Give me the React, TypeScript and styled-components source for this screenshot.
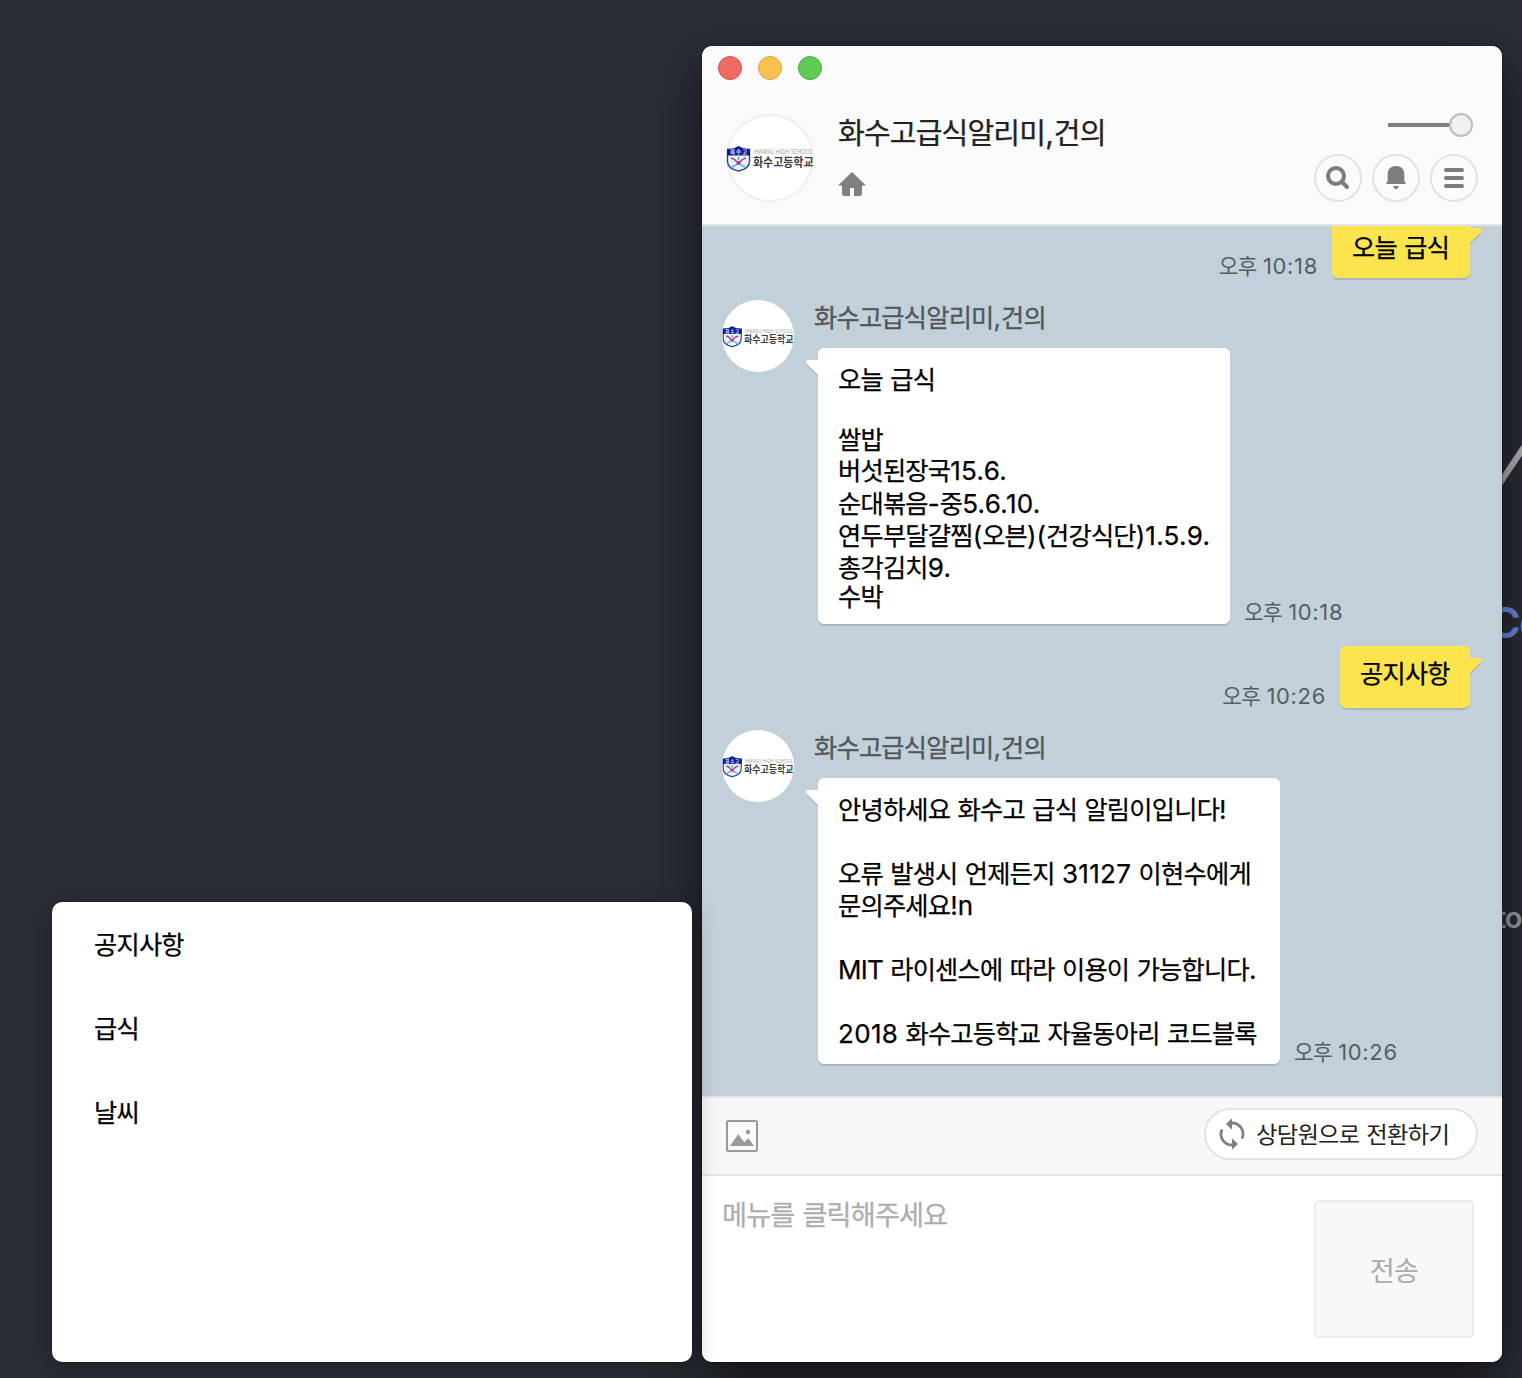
import React from "react";
import styled, { createGlobalStyle, css } from "styled-components";

const Global = createGlobalStyle`
  * { box-sizing: border-box; }
  html, body { margin: 0; padding: 0; }
  body { background: #2a2d36; }
`;

const Desktop = styled.div`
  position: relative;
  width: 1522px;
  height: 1378px;
  overflow: hidden;
  background: #2a2d36;
  font-family: Inter, "Noto Sans CJK KR", sans-serif;
`;

const BackdropText = styled.span<{ $top: number; $left: number; $size: number; $color: string }>`
  position: absolute;
  top: ${(p) => p.$top}px;
  left: ${(p) => p.$left}px;
  font-size: ${(p) => p.$size}px;
  line-height: 1;
  font-weight: 600;
  letter-spacing: -0.04em;
  color: ${(p) => p.$color};
  white-space: nowrap;
`;

const BackdropStroke = styled.svg`
  position: absolute;
  left: 1490px;
  top: 430px;
`;

const MenuWindow = styled.nav`
  position: absolute;
  left: 52px;
  top: 902px;
  width: 640px;
  height: 460px;
  border-radius: 10px;
  background: #fff;
  box-shadow: 0 0 2px rgba(0, 0, 0, 0.5), 0 6px 26px rgba(0, 0, 0, 0.3);
  display: flex;
  flex-direction: column;
  padding: 0 42px;
`;

const MenuItem = styled.div`
  height: 84px;
  display: flex;
  align-items: center;
  font-size: 26px;
  color: #000;
  -webkit-text-stroke: 0.25px;
`;

const ChatWindow = styled.main`
  position: absolute;
  left: 702px;
  top: 46px;
  width: 800px;
  height: 1316px;
  border-radius: 10px;
  background: #fff;
  box-shadow: 0 0 2px rgba(0, 0, 0, 0.7), 0 20px 50px rgba(0, 0, 0, 0.6);
`;

const ChatFrame = styled.div`
  height: 100%;
  border-radius: 10px;
  overflow: hidden;
  display: flex;
  flex-direction: column;
`;

const Header = styled.header`
  flex: 0 0 180px;
  background: #fafafa;
  border-bottom: 2px solid #e4e5e6;
  display: flex;
  flex-direction: column;
`;

const TrafficLights = styled.div`
  display: flex;
  gap: 16px;
  padding: 10px 16px 0;
`;

const Light = styled.i<{ $fill: string; $edge: string }>`
  width: 24px;
  height: 24px;
  border-radius: 50%;
  background: ${(p) => p.$fill};
  border: 1px solid ${(p) => p.$edge};
`;

const Profile = styled.div`
  display: flex;
  padding: 34px 24px 0;
`;

const ProfileInfo = styled.div`
  flex: 1;
  padding-left: 24px;
  display: flex;
  flex-direction: column;
  align-items: flex-start;
`;

const Title = styled.h1`
  margin: 0;
  font-size: 30px;
  font-weight: 400;
  line-height: 38px;
  color: #222;
  -webkit-text-stroke: 0.25px;
`;

const HomeIcon = styled.svg`
  margin-top: 20px;
`;

const Controls = styled.div`
  display: flex;
  flex-direction: column;
  align-items: flex-end;
  margin-top: -1px;
`;

const Slider = styled.div`
  display: flex;
  align-items: center;
  margin-right: 5px;
`;

const Track = styled.div`
  width: 61px;
  height: 4px;
  background: #808080;
`;

const Knob = styled.div`
  width: 24px;
  height: 24px;
  border-radius: 50%;
  background: #f0f0f0;
  border: 2px solid #bcbcbc;
`;

const ButtonRow = styled.div`
  display: flex;
  gap: 10px;
  margin-top: 17px;
`;

const RoundButton = styled.button`
  width: 48px;
  height: 48px;
  padding: 0;
  border-radius: 50%;
  border: 2px solid #e2e2e2;
  background: #fbfbfb;
  display: flex;
  align-items: center;
  justify-content: center;
`;

const AvatarCircle = styled.div<{ $size: number; $ring?: boolean }>`
  flex: none;
  width: ${(p) => p.$size}px;
  height: ${(p) => p.$size}px;
  border-radius: 50%;
  overflow: hidden;
  background: #fff;
  box-shadow: ${(p) => (p.$ring ? "inset 0 0 0 2px #efefef" : "none")};
  svg { display: block; }
`;

const Conversation = styled.section`
  flex: 1;
  min-height: 0;
  overflow: hidden;
  background: #c2d0da;
  display: flex;
  flex-direction: column;
  justify-content: flex-end;
  gap: 22px;
  padding: 0 32px 32px 20px;
`;

const MineRow = styled.div`
  flex: none;
  display: flex;
  justify-content: flex-end;
  align-items: flex-end;
  gap: 14px;
`;

const BotRow = styled.div`
  flex: none;
  display: flex;
  align-items: flex-start;
`;

const BotBody = styled.div`
  padding-left: 20px;
`;

const Sender = styled.div`
  height: 48px;
  padding-top: 2px;
  font-size: 26px;
  line-height: 32px;
  color: #50565b;
  -webkit-text-stroke: 0.3px;
`;

const BubbleRow = styled.div`
  display: flex;
  align-items: flex-end;
  gap: 14px;
  padding-left: 4px;
`;

const bubble = css`
  position: relative;
  border-radius: 6px;
  font-size: 26px;
  color: #000;
  box-shadow: 0 2px 0 #a9b7c3;
  -webkit-text-stroke: 0.25px;
`;

const MyBubble = styled.div<{ $width: number; $top: number }>`
  ${bubble}
  width: ${(p) => p.$width}px;
  height: 62px;
  padding: ${(p) => p.$top}px 20px 0;
  background: #fbe44d;
`;

const BotBubble = styled.div<{ $width: number; $top: number; $bottom: number }>`
  ${bubble}
  width: ${(p) => p.$width}px;
  padding: ${(p) => p.$top}px 20px ${(p) => p.$bottom}px;
  background: #fff;
`;

const Line = styled.div<{ $h: number }>`
  height: ${(p) => p.$h}px;
  line-height: ${(p) => p.$h}px;
  white-space: nowrap;
`;

const Tail = styled.svg<{ $mine?: boolean }>`
  position: absolute;
  top: 12px;
  ${(p) => (p.$mine ? "right: -12px; transform: scaleX(-1);" : "left: -12px;")}
`;

const Hangul = styled.span`
  font-family: "Noto Sans CJK KR", sans-serif;
  font-size: 0.97em;
  letter-spacing: -0.03em;
  line-height: 1;
`;

const Digits = styled.span`
  letter-spacing: 0.012em;
`;

const Latin = styled.span`
  letter-spacing: -0.03em;
`;

const Time = styled.time`
  font-size: 22px;
  line-height: 24px;
  color: #555d64;
  white-space: nowrap;
  ${Digits} { letter-spacing: 0.03em; }
`;

const Toolbar = styled.div`
  flex: 0 0 80px;
  border-top: 2px solid #e2e4e6;
  border-bottom: 2px solid #e4e4e4;
  background: #f7f7f7;
  display: flex;
  align-items: center;
  justify-content: space-between;
  padding: 0 24px;
`;

const TransferButton = styled.button`
  width: 274px;
  height: 52px;
  margin-bottom: 4px;
  padding: 0 0 0 8px;
  border: 2px solid #e3e3e3;
  border-radius: 26px;
  background: #fff;
  display: flex;
  align-items: center;
  gap: 6px;
  font-family: inherit;
  font-size: 24px;
  color: #222;
  white-space: nowrap;
`;

const Composer = styled.footer`
  flex: 0 0 186px;
  background: #fff;
  display: flex;
  justify-content: space-between;
  padding: 24px 28px 24px 20px;
`;

const Placeholder = styled.div`
  margin-top: -1px;
  font-size: 28px;
  line-height: 32px;
  color: #adadad;
  -webkit-text-stroke: 0.3px;
`;

const SendButton = styled.button`
  width: 160px;
  height: 138px;
  padding: 3px 0 0;
  border: 2px solid #ebebeb;
  border-radius: 5px;
  background: #f8f8f8;
  font-family: inherit;
  font-size: 28px;
  color: #aaa;
`;

const Text = ({ children }: { children: string }) => (
  <span>
    {children.split(/([\u3131-\uD79D]+|[0-9][0-9.:]*|[A-Z]+)/).map((part, i) => {
      if (i % 2 === 0) return part;
      if (/^[0-9]/.test(part)) return <Digits key={i}>{part}</Digits>;
      if (/^[A-Z]/.test(part)) return <Latin key={i}>{part}</Latin>;
      return <Hangul key={i}>{part}</Hangul>;
    })}
  </span>
);

const Avatar = ({ size, ring }: { size: number; ring?: boolean }) => (
  <AvatarCircle $size={size} $ring={ring}>
    <svg width={size} height={size} viewBox="0 0 88 88">
      <path d="M1.500 35.500 Q8 36 12.500 33 Q17 36 23.500 35.500 V47 Q23.500 55 12.500 57 Q1.500 55 1.500 47Z" fill="#e9f5fc" stroke="#2b3f9b" strokeWidth="1.400" />
      <path d="M1 35 Q8 35.500 12.500 32 Q17 35.500 24 35 V41.500 H1Z" fill="#0b1a9a" />
      <text x="4" y="40.200" fontSize="5.500" fontWeight="700" fill="#dfe6ff" textLength="17" fontFamily="Noto Sans CJK KR">화수고</text>
      <path d="M5 44 Q9 45 11 48 M20 44 Q16 45 14 48" stroke="#b23a8c" strokeWidth="1.700" fill="none" />
      <path d="M6 53 Q9 52 11 50 M19 53 Q16 52 14 50 M12.500 43V46" stroke="#4aa7dc" strokeWidth="1.600" fill="none" />
      <circle cx="12.500" cy="49" r="2" fill="#c22f70" />
      <text x="28" y="40" fontSize="7.200" fill="#9c9c9c" textLength="59" lengthAdjust="spacingAndGlyphs" fontFamily="Open Sans">HWASU HIGH SCHOOL</text>
      <text x="27" y="53" fontSize="12.500" fontWeight="700" fill="#3c3c3c" textLength="60.500" lengthAdjust="spacingAndGlyphs" fontFamily="Noto Sans CJK KR">화수고등학교</text>
    </svg>
  </AvatarCircle>
);

const BubbleTail = ({ mine }: { mine?: boolean }) => (
  <Tail $mine={mine} width="12" height="18" viewBox="0 0 12 18">
    <path d="M2 2 H12 V17 L1 6Z" fill="#a9b7c3" />
    <path d="M2 0 H12 V15 L1 4 Q-1 1 2 0Z" fill={mine ? "#fbe44d" : "#fff"} />
  </Tail>
);

type BotMessage = { width: number; top: number; bottom: number; time: string; lines: [string, number][] };

const meal: BotMessage = {
  width: 412,
  top: 18,
  bottom: 16,
  time: "오후 10:18",
  lines: [
    ["오늘 급식", 28],
    ["", 32],
    ["쌀밥", 28],
    ["버섯된장국15.6.", 34],
    ["순대볶음-중5.6.10.", 31],
    ["연두부달걀찜(오븐)(건강식단)1.5.9.", 33],
    ["총각김치9.", 31],
    ["수박", 25],
  ],
};

const notice: BotMessage = {
  width: 462,
  top: 16,
  bottom: 14,
  time: "오후 10:26",
  lines: [
    ["안녕하세요 화수고 급식 알림이입니다!", 32],
    ["", 32],
    ["오류 발생시 언제든지 31127 이현수에게", 32],
    ["문의주세요!n", 32],
    ["", 32],
    ["MIT 라이센스에 따라 이용이 가능합니다.", 32],
    ["", 32],
    ["2018 화수고등학교 자율동아리 코드블록", 32],
  ],
};

const Bot = ({ message }: { message: BotMessage }) => (
  <BotRow>
    <Avatar size={72} />
    <BotBody>
      <Sender><Text>화수고급식알리미,건의</Text></Sender>
      <BubbleRow>
        <BotBubble $width={message.width} $top={message.top} $bottom={message.bottom}>
          <BubbleTail />
          {message.lines.map(([text, h], i) => (
            <Line key={i} $h={h}><Text>{text}</Text></Line>
          ))}
        </BotBubble>
        <Time><Text>{message.time}</Text></Time>
      </BubbleRow>
    </BotBody>
  </BotRow>
);

const Mine = ({ text, time, width, top }: { text: string; time: string; width: number; top: number }) => (
  <MineRow>
    <Time><Text>{time}</Text></Time>
    <MyBubble $width={width} $top={top}>
      <BubbleTail mine />
      <Line $h={32}><Text>{text}</Text></Line>
    </MyBubble>
  </MineRow>
);

export default function App() {
  return (
    <Desktop>
      <Global />
      <BackdropStroke width="32" height="60" viewBox="0 0 32 60">
        <path d="M4 62 L36 14" stroke="#b4b4b6" strokeWidth="6" />
      </BackdropStroke>
      <BackdropText $top={601} $left={1489} $size={43} $color="#6c8ce0">Co</BackdropText>
      <BackdropText $top={903} $left={1496} $size={29} $color="#9a9ea9">to</BackdropText>
      <ChatWindow>
        <ChatFrame>
          <Header>
            <TrafficLights>
              <Light $fill="#ed6b60" $edge="#dc5046" />
              <Light $fill="#f6c351" $edge="#dfa33a" />
              <Light $fill="#62ca56" $edge="#4bad3b" />
            </TrafficLights>
            <Profile>
              <Avatar size={88} ring />
              <ProfileInfo>
                <Title><Text>화수고급식알리미,건의</Text></Title>
                <HomeIcon width="28" height="24" viewBox="0 0 28 24">
                  <path d="M14 0 L28 13.500 H24 V22 Q24 24 22 24 H16 V16 H12 V24 H6 Q4 24 4 22 V13.500 H0Z" fill="#808080" />
                </HomeIcon>
              </ProfileInfo>
              <Controls>
                <Slider><Track /><Knob /></Slider>
                <ButtonRow>
                  <RoundButton>
                    <svg width="44" height="44" viewBox="2 2 44 44" fill="none" stroke="#7d7d7d" strokeWidth="4" strokeLinecap="round">
                      <circle cx="22" cy="22" r="8" />
                      <path d="M28 28 L33 33" />
                    </svg>
                  </RoundButton>
                  <RoundButton>
                    <svg width="44" height="44" viewBox="2 2 44 44" fill="#7d7d7d">
                      <path d="M15.700 20 C15.700 15 19 12 24 12 C29 12 32.300 15 32.300 20 V26 Q32.500 28 34 30 H14 Q15.500 28 15.700 26Z" />
                      <path d="M21 32 H27 L26 34 L24 35.400 L22 34Z" />
                    </svg>
                  </RoundButton>
                  <RoundButton>
                    <svg width="44" height="44" viewBox="2 2 44 44" fill="none" stroke="#7d7d7d" strokeWidth="4" strokeLinecap="round">
                      <path d="M16 16H32M16 24H32M16 32H32" />
                    </svg>
                  </RoundButton>
                </ButtonRow>
              </Controls>
            </Profile>
          </Header>
          <Conversation>
            <Mine text="오늘 급식" time="오후 10:18" width={138} top={16} />
            <Bot message={meal} />
            <Mine text="공지사항" time="오후 10:26" width={130} top={12} />
            <Bot message={notice} />
          </Conversation>
          <Toolbar>
            <svg width="32" height="32" viewBox="0 0 32 32">
              <rect x="1" y="1" width="30" height="30" rx="1.500" fill="#fafafa" stroke="#999" strokeWidth="2" />
              <path d="M4 26 L12.200 14.200 L18.300 22.300 L22.300 18.200 L28 26Z" fill="#999" />
              <circle cx="22" cy="12" r="2.200" fill="#999" />
            </svg>
            <TransferButton>
              <svg width="36" height="36" viewBox="0 0 36 36">
                <path d="M18 7 A11 11 0 0 1 28 22.600 M18 29 A11 11 0 0 1 8 13.400" fill="none" stroke="#808080" strokeWidth="2.800" />
                <path d="M18 2.300 L12 8 L18 13.800Z M18 22.200 L24 28 L18 33.700Z" fill="#808080" />
              </svg>
              <Text>상담원으로 전환하기</Text>
            </TransferButton>
          </Toolbar>
          <Composer>
            <Placeholder><Text>메뉴를 클릭해주세요</Text></Placeholder>
            <SendButton><Text>전송</Text></SendButton>
          </Composer>
        </ChatFrame>
      </ChatWindow>
      <MenuWindow>
        <MenuItem><Text>공지사항</Text></MenuItem>
        <MenuItem><Text>급식</Text></MenuItem>
        <MenuItem><Text>날씨</Text></MenuItem>
      </MenuWindow>
    </Desktop>
  );
}
